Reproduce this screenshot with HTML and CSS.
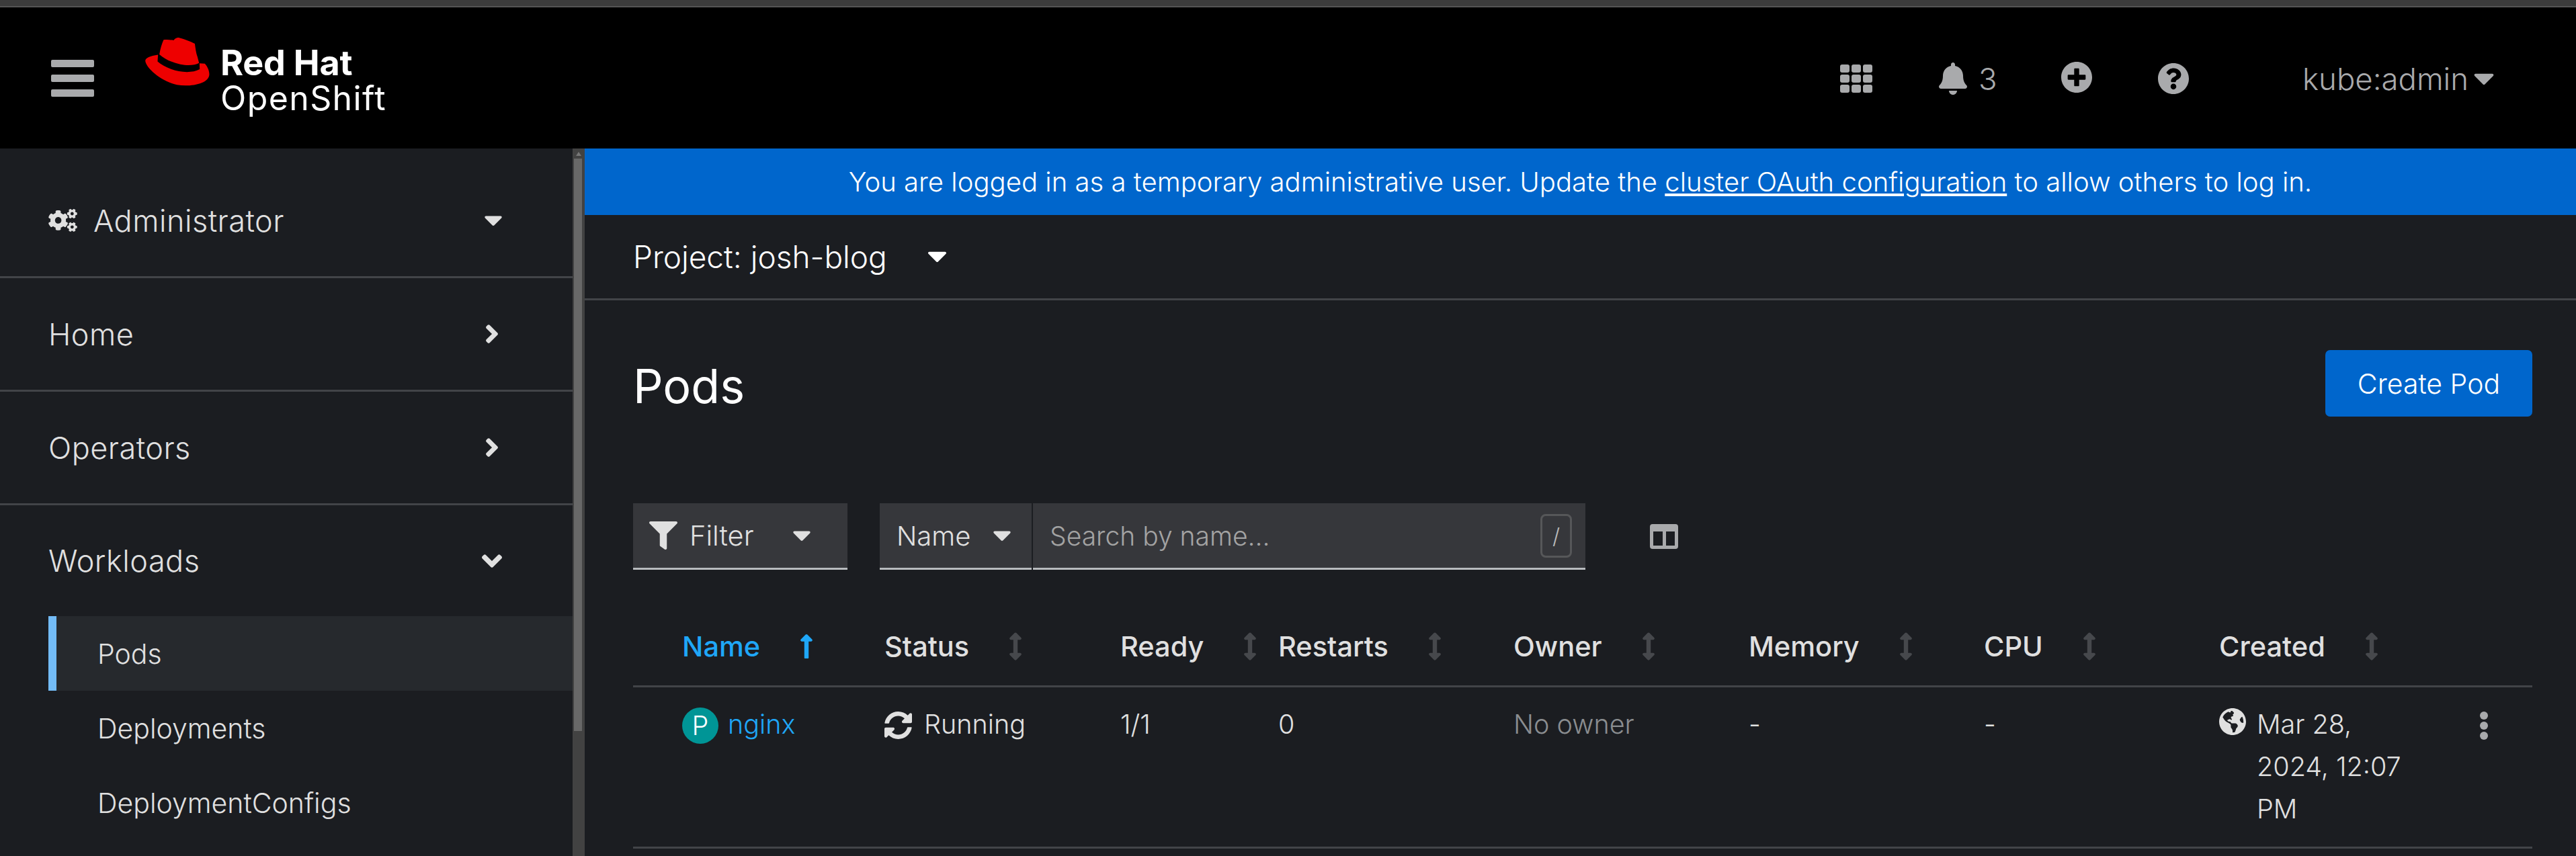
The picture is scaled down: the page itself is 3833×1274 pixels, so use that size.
FILE: index.html
```html
<!DOCTYPE html>
<html lang="en">
<head>
  <meta charset="UTF-8">
  <title>Pods - Red Hat OpenShift</title>
  <link rel="stylesheet" href="styles.css">
</head>
<body>

  <svg class="defs" aria-hidden="true">
    <symbol id="caret" viewBox="10 185 300 176"><path d="M31.3 192h257.3c17.8 0 26.7 21.5 14.1 34.1L174.1 354.8c-7.8 7.8-20.5 7.8-28.3 0L17.2 226.1C4.6 213.5 13.5 192 31.3 192z"/></symbol>
    <symbol id="angle-right" viewBox="24 96 208 320"><path d="M224.3 273l-136 136c-9.4 9.4-24.6 9.4-33.9 0l-22.6-22.6c-9.4-9.4-9.4-24.6 0-33.9l96.4-96.4-96.4-96.4c-9.4-9.4-9.4-24.6 0-33.9L54.3 103c9.4-9.4 24.6-9.4 33.9 0l136 136c9.5 9.4 9.5 24.6.1 34z"/></symbol>
    <symbol id="angle-down" viewBox="0 152 320 208"><path d="M143 352.3L7 216.3c-9.4-9.4-9.4-24.6 0-33.9l22.6-22.6c9.4-9.4 24.6-9.4 33.9 0l96.4 96.4 96.4-96.4c9.4-9.4 24.6-9.4 33.9 0l22.6 22.6c9.4 9.4 9.4 24.6 0 33.9l-136 136c-9.2 9.4-24.4 9.4-33.8 0z"/></symbol>
    <symbol id="sort" viewBox="16 0 224 512"><path d="M214.059 377.941H168V134.059h46.059c21.382 0 32.09-25.851 16.971-40.971L144.971 7.029c-9.373-9.373-24.569-9.373-33.941 0L24.971 93.088c-15.119 15.119-4.411 40.971 16.971 40.971H88v243.882H41.941c-21.382 0-32.09 25.851-16.971 40.971l86.059 86.059c9.373 9.373 24.569 9.373 33.941 0l86.059-86.059c15.12-15.119 4.412-40.971-16.97-40.971z"/></symbol>
  </svg>

  <div class="top-strip"></div>

  <header class="masthead">
    <button class="burger" aria-label="Navigation"><span></span><span></span><span></span></button>

    <div class="brand">
      <svg class="hat" viewBox="48 48 288 220">
        <path d="M130 58C145 55 160 58 175 60C180 52 190 47 198 48C215 52 250 65 270 75C273 95 275 115 282 135L289 162C270 172 240 175 205 168C170 160 135 145 111 123C115 100 122 75 130 58Z"/>
        <path d="M105 125C70 130 48 140 48 152C50 180 110 240 190 260C250 270 335 255 335 212C335 195 325 175 315 165L291 163L292 190C260 208 205 205 165 190C140 180 118 168 103 155Z"/>
      </svg>
      <div class="brand-text">
        <div class="brand-top">Red Hat</div>
        <div class="brand-bottom">OpenShift</div>
      </div>
    </div>

    <div class="tools">
      <svg class="ic-grid" viewBox="0 0 48 42">
        <rect x="0" y="0" width="14" height="12" rx="3"/><rect x="17" y="0" width="14" height="12" rx="3"/><rect x="34" y="0" width="14" height="12" rx="3"/>
        <rect x="0" y="15" width="14" height="12" rx="3"/><rect x="17" y="15" width="14" height="12" rx="3"/><rect x="34" y="15" width="14" height="12" rx="3"/>
        <rect x="0" y="30" width="14" height="12" rx="3"/><rect x="17" y="30" width="14" height="12" rx="3"/><rect x="34" y="30" width="14" height="12" rx="3"/>
      </svg>
      <svg class="ic-bell" viewBox="0 0 448 512"><path d="M224 512c35.32 0 63.97-28.65 63.97-64H160.03c0 35.35 28.65 64 63.97 64zm215.39-149.71c-19.32-20.76-55.47-51.99-55.47-154.29 0-77.7-54.48-139.9-127.94-155.16V32c0-17.67-14.32-32-31.98-32s-31.98 14.33-31.98 32v20.84C118.56 68.1 64.08 130.3 64.08 208c0 102.3-36.15 133.53-55.47 154.29-6 6.45-8.66 14.16-8.61 21.71.11 16.4 12.98 32 32.1 32h383.8c19.12 0 32-15.6 32.1-32 .05-7.55-2.61-15.27-8.61-21.71z"/></svg>
      <span class="bell-count">3</span>
      <svg class="ic-plus" viewBox="8 8 496 496"><path d="M256 8C119 8 8 119 8 256s111 248 248 248 248-111 248-248S393 8 256 8zm144 276c0 6.6-5.4 12-12 12h-92v92c0 6.6-5.4 12-12 12h-56c-6.6 0-12-5.4-12-12v-92h-92c-6.6 0-12-5.4-12-12v-56c0-6.6 5.4-12 12-12h92v-92c0-6.6 5.4-12 12-12h56c6.6 0 12 5.4 12 12v92h92c6.6 0 12 5.4 12 12v56z"/></svg>
      <svg class="ic-help" viewBox="8 8 496 496"><path d="M504 256c0 136.997-111.043 248-248 248S8 392.997 8 256C8 119.083 119.043 8 256 8s248 111.083 248 248zM262.655 90c-54.497 0-89.255 22.957-116.549 63.758-3.536 5.286-2.353 12.415 2.715 16.258l34.699 26.31c5.205 3.947 12.621 3.008 16.665-2.122 17.864-22.658 30.113-35.797 57.303-35.797 20.429 0 45.698 13.148 45.698 32.958 0 14.976-12.363 22.667-32.534 33.976C247.128 238.528 216 254.941 216 296v4c0 6.627 5.373 12 12 12h56c6.627 0 12-5.373 12-12v-1.333c0-28.462 83.186-29.647 83.186-106.667 0-58.002-60.165-102-116.531-102zM256 338c-25.365 0-46 20.635-46 46 0 25.364 20.635 46 46 46s46-20.636 46-46c0-25.365-20.635-46-46-46z"/></svg>
      <span class="user">kube:admin</span>
      <svg class="caret user-caret"><use href="#caret"/></svg>
    </div>
  </header>

  <div class="layout">
    <nav class="sidebar">
      <div class="nav-item nav-persp">
        <span class="nav-label">
          <svg class="ic-cogs" viewBox="0 0 640 512"><path d="M512.1 191l-8.2 14.3c-3 5.3-9.4 7.5-15.1 5.4-11.8-4.4-22.6-10.7-32.1-18.6-4.6-3.8-5.8-10.5-2.8-15.7l8.2-14.3c-6.9-8-12.3-17.3-15.9-27.4h-16.5c-6 0-11.2-4.3-12.2-10.3-2-12-2.1-24.6 0-37.1 1-6 6.2-10.4 12.2-10.4h16.5c3.6-10.1 9-19.4 15.9-27.4l-8.2-14.3c-3-5.2-1.9-11.9 2.8-15.7 9.5-7.9 20.4-14.2 32.1-18.6 5.7-2.1 12.1.1 15.1 5.4l8.2 14.3c10.5-1.9 21.2-1.9 31.7 0L552 6.3c3-5.3 9.4-7.5 15.1-5.4 11.8 4.4 22.6 10.7 32.1 18.6 4.6 3.8 5.8 10.5 2.8 15.7l-8.2 14.3c6.9 8 12.3 17.3 15.9 27.4h16.5c6 0 11.2 4.3 12.2 10.3 2 12 2.1 24.6 0 37.1-1 6-6.2 10.4-12.2 10.4h-16.5c-3.6 10.1-9 19.4-15.9 27.4l8.2 14.3c3 5.2 1.9 11.9-2.8 15.7-9.5 7.9-20.4 14.2-32.1 18.6-5.7 2.1-12.1-.1-15.1-5.4l-8.2-14.3c-10.4 1.9-21.2 1.9-31.7 0zm-10.5-58.8c38.5 29.6 82.4-14.3 52.8-52.8-38.5-29.7-82.4 14.3-52.8 52.8zM386.3 286.1l33.7 16.8c10.1 5.8 14.5 18.1 10.5 29.1-8.9 24.2-26.4 46.4-42.6 65.8-7.4 8.9-20.2 11.1-30.3 5.3l-29.1-16.8c-16 13.7-34.6 24.6-54.9 31.7v33.6c0 11.6-8.3 21.6-19.7 23.6-24.6 4.2-50.4 4.4-75.9 0-11.5-2-20-11.9-20-23.6V418c-20.3-7.2-38.9-18-54.9-31.7L74 403c-10 5.8-22.9 3.6-30.3-5.3-16.2-19.4-33.3-41.6-42.2-65.7-4-10.9.4-23.2 10.5-29.1l33.3-16.8c-3.9-20.9-3.9-42.4 0-63.4L12 205.8c-10.1-5.8-14.6-18.1-10.5-29 8.9-24.2 26-46.4 42.2-65.8 7.4-8.9 20.2-11.1 30.3-5.3l29.1 16.8c16-13.7 34.6-24.6 54.9-31.7V57.1c0-11.5 8.2-21.5 19.6-23.5 24.6-4.2 50.5-4.4 76-.1 11.5 2 20 11.9 20 23.6v33.6c20.3 7.2 38.9 18 54.9 31.7l29.1-16.8c10-5.8 22.9-3.6 30.3 5.3 16.2 19.4 33.2 41.6 42.1 65.8 4 10.9.1 23.2-10 29.1l-33.7 16.8c3.9 21 3.9 42.5 0 63.5zm-117.6 21.1c59.2-77-28.7-164.9-105.7-105.7-59.2 77 28.7 164.9 105.7 105.7zm243.4 182.7l-8.2 14.3c-3 5.3-9.4 7.5-15.1 5.4-11.8-4.4-22.6-10.7-32.1-18.6-4.6-3.8-5.8-10.5-2.8-15.7l8.2-14.3c-6.9-8-12.3-17.3-15.9-27.4h-16.5c-6 0-11.2-4.3-12.2-10.3-2-12-2.1-24.6 0-37.1 1-6 6.2-10.4 12.2-10.4h16.5c3.6-10.1 9-19.4 15.9-27.4l-8.2-14.3c-3-5.2-1.9-11.9 2.8-15.7 9.5-7.9 20.4-14.2 32.1-18.6 5.7-2.1 12.1.1 15.1 5.4l8.2 14.3c10.5-1.9 21.2-1.9 31.7 0l8.2-14.3c3-5.3 9.4-7.5 15.1-5.4 11.8 4.4 22.6 10.7 32.1 18.6 4.6 3.8 5.8 10.5 2.8 15.7l-8.2 14.3c6.9 8 12.3 17.3 15.9 27.4h16.5c6 0 11.2 4.3 12.2 10.3 2 12 2.1 24.6 0 37.1-1 6-6.2 10.4-12.2 10.4h-16.5c-3.6 10.1-9 19.4-15.9 27.4l8.2 14.3c3 5.2 1.9 11.9-2.8 15.7-9.5 7.9-20.4 14.2-32.1 18.6-5.7 2.1-12.1-.1-15.1-5.4l-8.2-14.3c-10.4 1.9-21.2 1.9-31.7 0zM501.6 431c38.5 29.6 82.4-14.3 52.8-52.8-38.5-29.6-82.4 14.3-52.8 52.8z"/></svg>
          Administrator
        </span>
        <svg class="caret"><use href="#caret"/></svg>
      </div>
      <div class="nav-item">
        <span class="nav-label">Home</span>
        <svg class="chev-right"><use href="#angle-right"/></svg>
      </div>
      <div class="nav-item">
        <span class="nav-label">Operators</span>
        <svg class="chev-right"><use href="#angle-right"/></svg>
      </div>
      <div class="nav-item nav-open">
        <span class="nav-label">Workloads</span>
        <svg class="chev-down"><use href="#angle-down"/></svg>
      </div>
      <ul class="subnav">
        <li class="active">Pods</li>
        <li>Deployments</li>
        <li>DeploymentConfigs</li>
      </ul>
    </nav>

    <div class="scrollbar">
      <div class="scroll-arrow"></div>
      <div class="scroll-thumb"></div>
    </div>

    <main class="content">
      <div class="banner">You are logged in as a temporary administrative user. Update the <a href="#">cluster OAuth configuration</a> to allow others to log in.</div>

      <div class="project-bar">
        <span>Project: josh-blog</span>
        <svg class="caret project-caret"><use href="#caret"/></svg>
      </div>

      <div class="title-row">
        <h1>Pods</h1>
        <button class="create-btn">Create Pod</button>
      </div>

      <div class="toolbar">
        <div class="select filter-select">
          <svg class="ic-filter" viewBox="0 0 512 512"><path d="M487.976 0H24.028C2.71 0-8.047 25.866 7.058 40.971L192 225.941V432c0 7.831 3.821 15.17 10.237 19.662l80 55.98C298.02 518.69 320 507.493 320 487.98V225.941l184.947-184.97C520.021 25.896 509.338 0 487.976 0z"/></svg>
          <span>Filter</span>
          <svg class="caret"><use href="#caret"/></svg>
        </div>
        <div class="select name-select">
          <span>Name</span>
          <svg class="caret"><use href="#caret"/></svg>
        </div>
        <div class="search">
          <span class="placeholder">Search by name...</span>
          <kbd class="slash">/</kbd>
        </div>
        <svg class="ic-columns" viewBox="0 0 42 37">
          <path fill-rule="evenodd" d="M4 0H38A4 4 0 0 1 42 4V33A4 4 0 0 1 38 37H4A4 4 0 0 1 0 33V4A4 4 0 0 1 4 0ZM5 11V32H19V11ZM24 11V32H37V11Z"/>
        </svg>
      </div>

      <div class="pods-table">
        <div class="pods-row pods-head">
          <div class="th sorted">Name <svg class="sort-up" viewBox="16 32 224 448"><path d="M88 166.059V468c0 6.627 5.373 12 12 12h56c6.627 0 12-5.373 12-12V166.059h46.059c21.382 0 32.09-25.851 16.971-40.971l-86.059-86.059c-9.373-9.373-24.569-9.373-33.941 0l-86.059 86.059c-15.119 15.119-4.411 40.971 16.971 40.971H88z"/></svg></div>
          <div class="th">Status <svg class="sort"><use href="#sort"/></svg></div>
          <div class="th">Ready <svg class="sort"><use href="#sort"/></svg></div>
          <div class="th">Restarts <svg class="sort"><use href="#sort"/></svg></div>
          <div class="th">Owner <svg class="sort"><use href="#sort"/></svg></div>
          <div class="th">Memory <svg class="sort"><use href="#sort"/></svg></div>
          <div class="th">CPU <svg class="sort"><use href="#sort"/></svg></div>
          <div class="th">Created <svg class="sort"><use href="#sort"/></svg></div>
          <div></div>
        </div>
        <div class="pods-row pods-body">
          <div class="td pod-name"><span class="badge">P</span><a href="#">nginx</a></div>
          <div class="td pod-status">
            <svg class="ic-sync" viewBox="8 8 496 496"><path d="M370.72 133.28C339.458 104.008 298.888 87.962 255.848 88c-77.458.068-144.328 53.178-162.791 126.85-1.344 5.363-6.122 9.15-11.651 9.15H24.103c-7.498 0-13.194-6.807-11.807-14.176C33.933 94.924 134.813 8 256 8c66.448 0 126.791 26.136 171.315 68.685L463.03 40.97C478.149 25.851 504 36.559 504 57.941V192c0 13.255-10.745 24-24 24H345.941c-21.382 0-32.09-25.851-16.971-40.971l41.75-41.749zM32 296h134.059c21.382 0 32.09 25.851 16.971 40.971l-41.75 41.75c31.262 29.273 71.835 45.319 114.876 45.28 77.418-.07 144.315-53.144 162.787-126.849 1.344-5.363 6.122-9.15 11.651-9.15h57.304c7.498 0 13.194 6.807 11.807 14.176C478.067 417.076 377.187 504 256 504c-66.448 0-126.791-26.136-171.315-68.685L48.97 471.03C33.851 486.149 8 475.441 8 454.059V320c0-13.255 10.745-24 24-24z"/></svg>
            Running
          </div>
          <div class="td">1/1</div>
          <div class="td">0</div>
          <div class="td muted">No owner</div>
          <div class="td">-</div>
          <div class="td">-</div>
          <div class="td pod-created">
            <svg class="ic-globe" viewBox="0 8 496 496"><path d="M248 8C111.03 8 0 119.03 0 256s111.03 248 248 248 248-111.03 248-248S384.97 8 248 8zm82.29 357.6c-3.9 3.88-7.99 7.95-11.31 11.28-2.99 3-5.1 6.7-6.17 10.71-1.51 5.66-2.73 11.38-4.77 16.87l-17.39 46.85c-13.76 3-28 4.69-42.65 4.69v-27.38c1.69-12.62-7.64-36.26-22.63-51.25-6-6-9.37-14.14-9.37-22.63v-32.01c0-11.64-6.27-22.34-16.46-27.97-14.37-7.95-34.81-19.06-48.81-26.11-11.48-5.78-22.1-13.14-31.65-21.75l-.8-.72a114.792 114.792 0 0 1-18.06-20.74c-9.38-13.77-24.66-36.42-34.59-51.14 20.47-45.5 57.36-82.04 103.2-101.89l24.01 12.01C203.48 89.74 216 82.01 216 70.11v-11.3c7.99-1.29 16.12-2.11 24.39-2.42l28.3 28.3c6.25 6.25 6.25 16.38 0 22.63L264 112l-10.34 10.34c-3.12 3.12-3.12 8.19 0 11.31l4.69 4.69c3.12 3.12 3.12 8.19 0 11.31l-8 8a8.008 8.008 0 0 1-5.66 2.34h-8.99c-2.08 0-4.08.81-5.58 2.27l-9.92 9.65a8.008 8.008 0 0 0-1.58 9.31l15.59 31.19c2.66 5.32-1.21 11.58-7.15 11.58h-5.64c-1.93 0-3.79-.7-5.24-1.96l-9.28-8.06a16.017 16.017 0 0 0-15.55-3.1l-31.17 10.39a11.95 11.95 0 0 0-8.17 11.34c0 4.53 2.56 8.66 6.61 10.69l11.08 5.54c9.41 4.71 19.79 7.16 30.31 7.16s22.59 27.29 32 32h66.75c8.49 0 16.62 3.37 22.63 9.37l13.69 13.69a30.503 30.503 0 0 1 8.93 21.57 46.536 46.536 0 0 1-13.72 32.98zM417 274.25c-5.79-1.45-10.84-5-14.15-9.97l-17.98-26.97a23.97 23.97 0 0 1 0-26.62l19.59-29.38c2.32-3.47 5.5-6.29 9.24-8.15l12.98-6.49C440.2 193.59 448 223.87 448 256c0 8.67-.74 17.16-1.82 25.54L417 274.25z"/></svg>
            <span class="date">Mar 28, 2024, 12:07 PM</span>
          </div>
          <div class="td kebab"><span></span><span></span><span></span></div>
        </div>
      </div>
    </main>
  </div>

</body>
</html>
```

FILE: styles.css
```css
* {
  box-sizing: border-box;
}
html, body {
  height: 100%;
}
body {
  margin: 0;
  overflow: hidden;
  background: #1b1d21;
  color: #e0e0e0;
  font-family: Inter, "Noto Sans", sans-serif;
  font-size: 39px;
  font-weight: 300;
}
svg {
  fill: currentColor;
  display: block;
  flex: none;
}
.defs {
  display: none;
}

.top-strip {
  height: 11px;
  background: #3c3c3c;
  border-bottom: 2px solid #555;
}

/* masthead */
.masthead {
  height: 210px;
  background: #000;
  display: flex;
  align-items: center;
  color: #a9aaac;
}
.burger {
  width: 64px;
  margin-left: 76px;
  padding: 0;
  border: none;
  background: none;
  display: flex;
  flex-direction: column;
  gap: 11px;
}
.burger span {
  display: block;
  height: 11px;
  border-radius: 2px;
  background: #a9aaac;
}
.brand {
  display: flex;
  margin-left: 76px;
  color: #fff;
}
.hat {
  width: 96px;
  height: 73px;
  margin-top: -4px;
  fill: #e00;
}
.brand-text {
  margin: 8px 0 0 16px;
}
.brand-top {
  font-size: 52px;
  font-weight: 700;
  line-height: 52px;
  letter-spacing: -0.2px;
}
.brand-bottom {
  font-size: 50px;
  font-weight: 400;
  line-height: 52px;
  letter-spacing: 1.4px;
}
.tools {
  margin-left: auto;
  display: flex;
  align-items: center;
  padding-right: 122px;
  padding-top: 2px;
  font-size: 45.5px;
}
.ic-grid {
  width: 48px;
  height: 42px;
}
.ic-bell {
  width: 42px;
  height: 48px;
  margin-left: 99px;
}
.bell-count {
  margin-left: 17px;
  width: 28px;
}
.ic-plus {
  width: 46px;
  height: 46px;
  margin-left: 95px;
  margin-top: -4px;
}
.ic-help {
  width: 46px;
  height: 46px;
  margin-left: 98px;
}
.user {
  margin-left: 169px;
}
.caret {
  width: 26px;
  height: 15px;
}
.user-caret {
  margin-left: 8px;
  width: 30px;
  height: 17px;
}

/* sidebar */
.layout {
  display: flex;
  height: 1053px;
}
.sidebar {
  width: 852px;
  flex: none;
  background: #1b1d21;
}
.nav-item {
  height: 169px;
  padding: 0 105px 0 72px;
  display: flex;
  align-items: center;
  justify-content: space-between;
  border-bottom: 3px solid #424448;
  font-size: 45px;
  letter-spacing: 0.5px;
}
.nav-persp {
  height: 193px;
  padding-top: 24px;
}
.nav-open {
  height: 165px;
  border-bottom: none;
}
.nav-label {
  display: flex;
  align-items: center;
}
.ic-cogs {
  width: 43px;
  height: 34px;
  margin-right: 24px;
}
.chev-right {
  width: 18px;
  height: 30px;
  margin-right: 6px;
}
.chev-down {
  width: 30px;
  height: 20px;
}
.subnav {
  list-style: none;
  margin: 0;
  padding: 0 0 0 72px;
  font-size: 41px;
}
.subnav li {
  height: 111px;
  display: flex;
  align-items: center;
  padding-left: 73px;
}
.subnav .active {
  background: #26292d;
  border-left: 12px solid #73bcf7;
  padding-left: 61px;
}
.scrollbar {
  width: 18px;
  flex: none;
  background: #424242;
}
.scroll-arrow {
  height: 15px;
  position: relative;
}
.scroll-arrow::after {
  content: "";
  position: absolute;
  left: 5px;
  top: 5px;
  border: 4px solid transparent;
  border-top: none;
  border-bottom: 6px solid #777;
}
.scroll-thumb {
  width: 12px;
  margin-left: 2px;
  height: 852px;
  background: #686868;
}

/* main */
.content {
  flex: 1;
  min-width: 0;
}
.banner {
  height: 99px;
  background: #0066cc;
  color: #fff;
  text-align: center;
  line-height: 99px;
  font-size: 40.1px;
}
.banner a {
  color: #fff;
}
.project-bar {
  height: 127px;
  padding-left: 72px;
  display: flex;
  align-items: center;
  border-bottom: 3px solid #424448;
  color: #fff;
  font-size: 46px;
}
.project-caret {
  margin-left: 60px;
  width: 29px;
  height: 16px;
}
.title-row {
  height: 175px;
  padding: 74px 65px 0 72px;
  display: flex;
  align-items: flex-start;
  justify-content: space-between;
}
h1 {
  margin: 4px 0 0;
  font-size: 70px;
  font-weight: 400;
  line-height: 99px;
  color: #fff;
}
.create-btn {
  width: 308px;
  height: 99px;
  border: none;
  border-radius: 7px;
  background: #0066cc;
  color: #fff;
  font: inherit;
  font-size: 41px;
}
.toolbar {
  margin-top: 127px;
  padding-left: 72px;
  display: flex;
  align-items: center;
}
.select,
.search {
  height: 99px;
  background: #36373b;
  border-bottom: 3px solid #b8bbbe;
  display: flex;
  align-items: center;
}
.filter-select {
  width: 319px;
  padding-left: 24px;
  font-size: 41.5px;
}
.ic-filter {
  width: 42px;
  height: 42px;
  margin-right: 18px;
}
.filter-select .caret {
  margin-left: 58px;
}
.name-select {
  width: 226px;
  margin-left: 48px;
  padding-left: 25px;
  font-size: 40px;
}
.name-select .caret {
  margin-left: 34px;
}
.search {
  width: 822px;
  margin-left: 2px;
  padding: 0 20px 0 25px;
  justify-content: space-between;
}
.placeholder {
  color: #a3a3a3;
}
.slash {
  width: 47px;
  height: 65px;
  border: 3px solid #565759;
  border-radius: 8px;
  font: inherit;
  font-size: 32px;
  color: #bbb;
  display: flex;
  align-items: center;
  justify-content: center;
}
.ic-columns {
  width: 42px;
  height: 37px;
  margin-left: 96px;
  color: #a9aaac;
}
.pods-table {
  margin: 0 65px 0 72px;
}
.pods-row {
  display: grid;
  grid-template-columns: 301px 351px 235px 350px 350px 350px 350px 350px 1fr;
  padding-left: 73px;
  border-bottom: 3px solid #424448;
}
.pods-head {
  height: 175px;
  align-items: center;
  padding-top: 55px;
  font-weight: 500;
  font-size: 41.5px;
}
.th {
  display: flex;
  align-items: center;
  gap: 60px;
}
.sort {
  width: 18px;
  height: 42px;
  color: #46484c;
}
.sorted {
  color: #1fa7f8;
}
.sort-up {
  width: 18px;
  height: 38px;
}
.pods-body {
  height: 240px;
  padding-top: 24px;
}
.td {
  line-height: 63px;
  font-size: 39.5px;
}
.pod-name,
.pod-status {
  display: flex;
  align-items: flex-start;
}
.badge {
  width: 54px;
  height: 54px;
  margin-top: 6px;
  border-radius: 50%;
  background: #009596;
  color: #fff;
  display: flex;
  align-items: center;
  justify-content: center;
}
.pod-name a {
  margin-left: 14px;
  color: #1fa7f8;
  text-decoration: none;
}
.ic-sync {
  width: 41px;
  height: 41px;
  margin: 12px 18px 0 0;
}
.muted {
  color: #8a8d90;
}
.pod-created {
  display: flex;
  align-items: flex-start;
}
.ic-globe {
  width: 40px;
  height: 40px;
  margin: 7px 16px 0 0;
}
.date {
  width: 250px;
}
.kebab {
  display: flex;
  flex-direction: column;
  gap: 3px;
  padding: 12px 0 0 38px;
}
.kebab span {
  width: 12px;
  height: 12px;
  border-radius: 50%;
  background: #a9aaac;
}
```
